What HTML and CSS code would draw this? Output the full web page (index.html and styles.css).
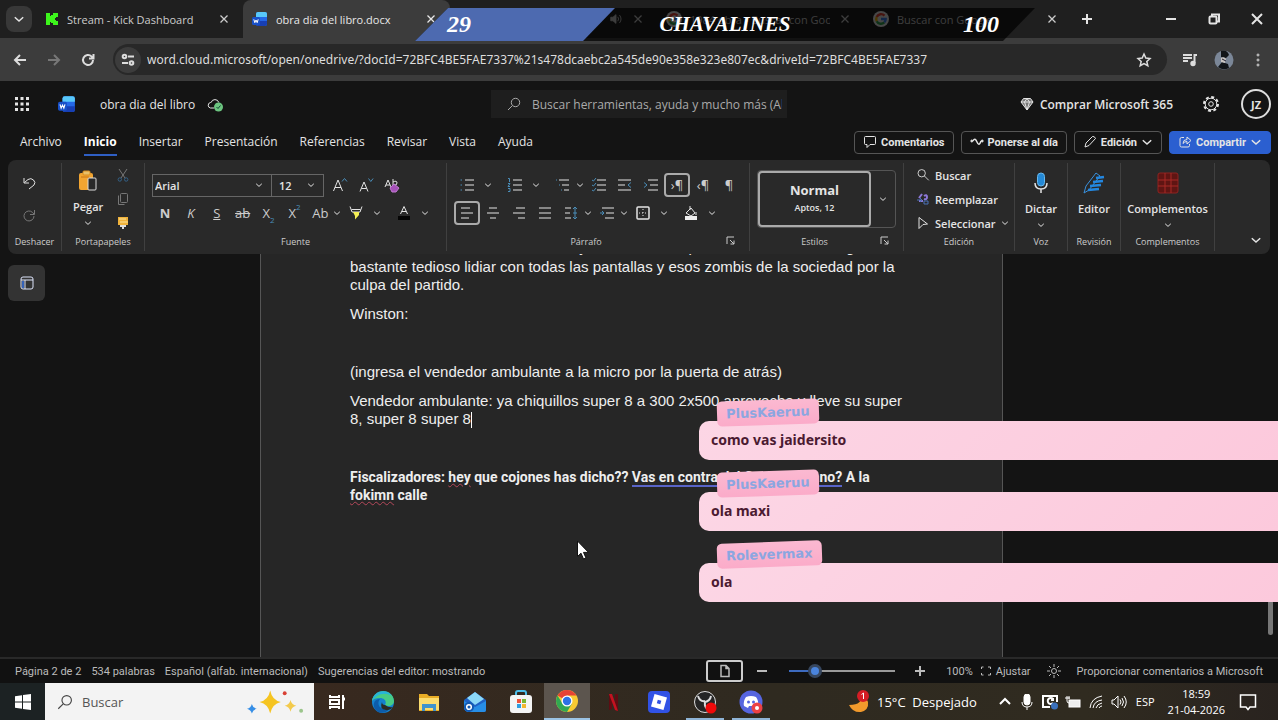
FILE: index.html
```html
<!DOCTYPE html>
<html lang="es">
  <head>
    <meta charset="UTF-8" />
    <meta name="viewport" content="width=device-width, initial-scale=1.0" />
    <title>obra dia del libro.docx</title>
    <link rel="stylesheet" href="styles.css">
  </head>
  <body>
    <!-- Iconos compartidos -->
    <svg class="sprite" aria-hidden="true">
      <symbol id="caret" viewBox="0 0 8 8"><path d="M1.2 2.8 4 5.4l2.8-2.6" /></symbol>
      <symbol id="close" viewBox="0 0 16 16"><path d="m4 4 8 8m0-8-8 8" stroke-width="1.5" /></symbol>
      <symbol id="search" viewBox="0 0 16 16"><circle cx="9.5" cy="6.5" r="4.2" /><path d="M6.4 9.6 2 14" /></symbol>
      <symbol id="google" viewBox="0 0 16 16">
        <circle cx="8" cy="8" r="8" fill="#eee" stroke="none" />
        <g fill="none" stroke-width="2.4">
          <path d="M11.5 4.6A4.8 4.8 0 0 0 3.7 6" stroke="#ea4335" />
          <path d="M3.7 6a4.8 4.8 0 0 0 0 4.2" stroke="#fbbc05" />
          <path d="M3.7 10.2a4.8 4.8 0 0 0 7.6 1.2" stroke="#34a853" />
          <path d="M11.3 11.4A4.6 4.6 0 0 0 12.7 8H8" stroke="#4285f4" />
        </g>
      </symbol>
      <symbol id="word" viewBox="0 0 16 16">
        <rect x="4" y="1" width="11" height="14" rx="2" fill="#2468e8" stroke="none" />
        <path d="M4 6V3a2 2 0 0 1 2-2h7a2 2 0 0 1 2 2v3z" fill="#58c8fa" stroke="none" />
        <path d="M4 10h11v3a2 2 0 0 1-2 2H6a2 2 0 0 1-2-2z" fill="#173fb4" stroke="none" />
        <rect x="0" y="6" width="8" height="8" rx="1.5" fill="#1850c8" stroke="none" />
        <path d="m1.8 8.3 1 3.4L4 9l1.2 2.7 1-3.4" stroke="#fff" />
      </symbol>
      <symbol id="launcher" viewBox="0 0 10 10"><path d="M1 8V1h7M4 4l4 4M8 4.5V8H4.5" /></symbol>
    </svg>

    <header class="browser">
      <div class="tab-strip">
        <button class="tab-search" aria-label="Buscar pestañas"><svg class="i12"><use href="#caret" /></svg></button>
        <div class="tab">
          <svg class="i14" viewBox="0 0 14 14"><path d="M1 1h4v3h1V3h2V1h5v4h-2v1h-1v2h1v1h2v4H8v-2H6v-1H5v3H1z" fill="#3df51c" stroke="none" /></svg>
          <span class="tab-title">Stream - Kick Dashboard</span>
          <button class="tab-close" aria-label="Cerrar"><svg class="i14"><use href="#close" /></svg></button>
        </div>
        <div class="tab active">
          <svg class="i16"><use href="#word" /></svg>
          <span class="tab-title">obra dia del libro.docx</span>
          <button class="tab-close" aria-label="Cerrar"><svg class="i14"><use href="#close" /></svg></button>
        </div>
        <div class="tab">
          <span class="tab-title"></span>
          <svg class="i14" viewBox="0 0 16 16"><path d="M2 6v4h2.5L8 13V3L4.5 6z" fill="currentColor" /><path d="M10 5.5q2 2.5 0 5M12 3.500q3.500 4.500 0 9" /></svg>
          <button class="tab-close" aria-label="Cerrar"><svg class="i14"><use href="#close" /></svg></button>
        </div>
        <div class="tab">
          <svg class="i16"><use href="#google" /></svg>
          <span class="tab-title">1984 obra - Buscar con Goo</span>
          <button class="tab-close" aria-label="Cerrar"><svg class="i14"><use href="#close" /></svg></button>
        </div>
        <div class="tab">
          <svg class="i16"><use href="#google" /></svg>
          <span class="tab-title">Buscar con Google</span>
          <button class="tab-close" aria-label="Cerrar"><svg class="i14"><use href="#close" /></svg></button>
        </div>
        <button class="new-tab" aria-label="Nueva pestaña"><svg class="i14 bold" viewBox="0 0 14 14"><path d="M7 2v10M2 7h10" /></svg></button>
        <div class="window-controls">
          <button aria-label="Minimizar"><svg class="i14 bold" viewBox="0 0 14 14"><path d="M2 7h10" /></svg></button>
          <button aria-label="Restaurar"><svg class="i14 bold" viewBox="0 0 14 14"><rect x="2.500" y="4.500" width="7" height="7" rx="1" /><path d="M5 4.500v-2h7v7h-2.500" /></svg></button>
          <button aria-label="Cerrar ventana"><svg class="i14 bold" viewBox="0 0 14 14"><path d="m2 2 10 10m0-10L2 12" /></svg></button>
        </div>
      </div>

      <div class="toolbar">
        <button aria-label="Atrás"><svg class="i16 bold" viewBox="0 0 16 16"><path d="M14 8H3m5-5L3 8l5 5" /></svg></button>
        <button class="dim" aria-label="Adelante"><svg class="i16 bold" viewBox="0 0 16 16"><path d="M2 8h11M8 3l5 5-5 5" /></svg></button>
        <button aria-label="Recargar"><svg class="i16 bold" viewBox="0 0 16 16"><path d="M13 8a5 5 0 1 1-1.500-3.600L13 6M13.500 2v4.500H9" /></svg></button>
        <div class="address">
          <span class="site-info"><svg class="i16 bold" viewBox="0 0 16 16"><circle cx="4.500" cy="4.500" r="1.800" /><path d="M8 4.500h6M2 11h6" /><circle cx="11.500" cy="11" r="1.800" /></svg></span>
          <input class="url" type="text" aria-label="Dirección" value="word.cloud.microsoft/open/onedrive/?docId=72BFC4BE5FAE7337%21s478dcaebc2a545de90e358e323e807ec&amp;driveId=72BFC4BE5FAE7337" />
          <svg class="i16" viewBox="0 0 16 16"><path d="m8 2 1.800 4 4.200.5-3.200 2.900 1 4.300L8 11.500l-3.800 2.200 1-4.300L2 6.500 6.200 6z" stroke-width="1.500" /></svg>
        </div>
        <button aria-label="Multimedia"><svg class="i16 bold" viewBox="0 0 16 16"><path d="M1 3h9M1 6h9M1 9h5M12.500 11V3H15" /><circle cx="11" cy="11.500" r="1.700" fill="currentColor" /></svg></button>
        <button aria-label="Perfil"><svg class="i20" viewBox="0 0 20 20"><circle cx="10" cy="10" r="9.500" fill="#7b8798" stroke="none" /><path d="M7 1q6-2 8 4l-3 3-5-1zM4 17l4-5 6 2 1 4q-6 3-11-1" fill="#111519" stroke="none" /><path d="M7 8q3-2 5 1l-1 4-4-1z" fill="#c9c5c2" stroke="none" /><path d="m8 9 4 2" stroke="#223" /></svg></button>
        <button aria-label="Menú"><svg class="i16" viewBox="0 0 16 16" fill="currentColor"><circle cx="8" cy="3" r="1" /><circle cx="8" cy="8" r="1" /><circle cx="8" cy="13" r="1" /></svg></button>
      </div>
    </header>

    <div class="app-header">
      <div class="app-title">
        <button aria-label="Aplicaciones"><svg class="i16" viewBox="0 0 16 16"><path class="dots" d="M2.500 2.500v0M8 2.500v0M13.500 2.500v0M2.500 8v0M8 8v0M13.500 8v0M2.500 13.500v0M8 13.500v0M13.500 13.500v0" /></svg></button>
        <svg class="i18"><use href="#word" /></svg>
        <span class="doc-name">obra dia del libro</span>
        <svg class="i16" viewBox="0 0 16 16"><path d="M7 12H3.500a2.800 2.800 0 0 1 0-5.500h.6a4 4 0 0 1 7.700 0" /><circle cx="11.500" cy="11" r="4.500" fill="#6cc580" stroke="none" /><path d="m9.500 11 1.500 1.500 2.500-3" stroke="#143" /></svg>
      </div>
      <label class="app-search">
        <svg class="i16"><use href="#search" /></svg>
        <input type="text" aria-label="Buscar" placeholder="Buscar herramientas, ayuda y mucho más (Alt + Q)" />
      </label>
      <div class="account">
        <a class="buy" href="#comprar"><svg class="i14" viewBox="0 0 14 14"><path d="M3.500 1.500h7L13 5l-6 8L1 5z" fill="#777" /><path d="M1 5h12M4.500 5 7 13l2.500-8L7 1.500z" /></svg>Comprar Microsoft 365</a>
        <button aria-label="Configuración"><svg class="i18" viewBox="0 0 18 18"><circle cx="9" cy="9" r="5.800" /><circle cx="9" cy="9" r="2.300" /><circle cx="9" cy="9" r="7" stroke-width="2" stroke-dasharray="3 2.500" /></svg></button>
        <button class="avatar">JZ</button>
      </div>
    </div>

    <div class="menu-row">
      <nav class="menu">
        <a href="#archivo">Archivo</a>
        <a class="selected" href="#inicio">Inicio</a>
        <a href="#insertar">Insertar</a>
        <a href="#presentacion">Presentación</a>
        <a href="#referencias">Referencias</a>
        <a href="#revisar">Revisar</a>
        <a href="#vista">Vista</a>
        <a href="#ayuda">Ayuda</a>
      </nav>
      <div class="actions">
        <button><svg class="i14" viewBox="0 0 14 14"><path d="M2.500 1.500h9a1 1 0 0 1 1 1v6a1 1 0 0 1-1 1H7l-3 3v-3H2.500a1 1 0 0 1-1-1v-6a1 1 0 0 1 1-1z" /></svg>Comentarios</button>
        <button><svg class="i14" viewBox="0 0 14 14"><path d="M3 6q2-4 4 1t4-1" stroke-width="1.500" /><circle cx="1.800" cy="6" r="1" fill="currentColor" /><circle cx="12.200" cy="6" r="1" fill="currentColor" /></svg>Ponerse al día</button>
        <button><svg class="i14" viewBox="0 0 14 14"><path d="m2 12 1-4 6.500-6.500q2-.5 3 2L6 10.500z" /></svg>Edición<svg class="i12"><use href="#caret" /></svg></button>
        <button class="share"><svg class="i14" viewBox="0 0 14 14"><path d="M6 2.500H3.500a1.500 1.500 0 0 0-1.500 1.500v6.500A1.500 1.500 0 0 0 3.500 12H10a1.500 1.500 0 0 0 1.500-1.500V9M5 8.500q0-4 4-4V2l4 3.500L9 9V6.500q-2.500 0-4 2z" /></svg>Compartir<svg class="i12"><use href="#caret" /></svg></button>
      </div>
    </div>

    <div class="ribbon">
      <section class="group undo">
        <div class="group-body center spread">
          <button aria-label="Deshacer"><svg class="i16" viewBox="0 0 16 16"><path d="M3 3v5h5M3.500 7.500 7 4.500q3-2 5.500.5t.5 5L8 14" /></svg></button>
          <button class="dim" aria-label="Rehacer"><svg class="i16" viewBox="0 0 16 16"><path d="M13 8a5 5 0 1 1-1.500-3.600L13 6M13.500 2v4.500H9" /></svg></button>
        </div>
        <footer>Deshacer</footer>
      </section>

      <section class="group clipboard">
        <div class="group-body row">
          <button class="big paste">
            <svg class="i24" viewBox="0 0 24 24"><rect x="3" y="4" width="14" height="17" rx="2" fill="#f2a531" stroke="none" /><rect x="7" y="2" width="7" height="4" rx="1" fill="#e8c06a" stroke="#d88c1c" /><path d="M5 8h8v10" stroke="#c87617" /><rect x="12" y="9" width="8" height="12" rx="1" fill="#292929" stroke="#ddd" /></svg>
            Pegar
            <svg class="i8"><use href="#caret" /></svg>
          </button>
          <div class="stack">
            <button class="dim" aria-label="Cortar"><svg class="i14" viewBox="0 0 14 14"><path d="m3 1 6 9m2-9-6 9" /><circle cx="3.800" cy="11.500" r="1.700" stroke="#346187" /><circle cx="10.200" cy="11.500" r="1.700" stroke="#346187" /></svg></button>
            <button class="dim" aria-label="Copiar"><svg class="i14" viewBox="0 0 14 14"><rect x="4.500" y="1.500" width="7" height="9" rx="1" /><path d="M2.500 3.500v9h6" /></svg></button>
            <button aria-label="Copiar formato"><svg class="i14" viewBox="0 0 14 14"><path d="M2 1h10v8H2z" fill="#f0b23a" stroke="none" /><path d="M3 3h7M4 6h8" stroke="#fbe29a" /><path d="M4 9h6v2H8v2H6v-2H4z" fill="#ddd" stroke="none" /></svg></button>
          </div>
        </div>
        <footer>Portapapeles</footer>
      </section>

      <section class="group font">
        <div class="group-body">
          <div class="tools">
            <label class="combo family">
              <select aria-label="Fuente"><option>Arial</option></select>
              <svg class="i8"><use href="#caret" /></svg>
            </label>
            <label class="combo size">
              <select aria-label="Tamaño"><option>12</option></select>
              <svg class="i8"><use href="#caret" /></svg>
            </label>
            <button aria-label="Aumentar tamaño"><svg class="i16" viewBox="0 0 16 16"><path d="M1.500 14 6 3l4.500 11M3 10.500h6" /><path d="m10 4.500 2.500-3 2.500 3" class="blue" /></svg></button>
            <button aria-label="Reducir tamaño"><svg class="i16" viewBox="0 0 16 16"><path d="M2 14.500 6 5l4 9.500M3.500 11.500h5" /><path d="m10.500 1.500 2.300 3 2.300-3" class="blue" /></svg></button>
            <button aria-label="Borrar formato"><svg class="i16" viewBox="0 0 16 16"><path d="M1 10 4 3l3 7M2 8h4M9 2v6M9 5q4-2 4 1t-4 2" /><path d="m6 11 4-4 5 4-3 4H8z" fill="#a552b8" stroke="#c27bd2" /></svg></button>
          </div>
          <div class="tools">
            <button class="letter bold-letter">N</button>
            <button class="letter italic">K</button>
            <button class="letter underline">S</button>
            <button class="letter strike">ab</button>
            <button class="letter">X<sub>2</sub></button>
            <button class="letter">X<sup>2</sup></button>
            <span class="split narrow"><button class="letter">Ab</button><svg class="i8"><use href="#caret" /></svg></span>
            <span class="split"><button aria-label="Resaltado"><svg class="i16" viewBox="0 0 16 16"><path d="M2 1.500 4 7h8l2-5.500M3.500 4.500h9" /><path d="M5 7h6v3l-4 4.500V11z" fill="#f4ef55" stroke="none" /></svg></button><svg class="i8"><use href="#caret" /></svg></span>
            <span class="split"><button aria-label="Color de fuente"><svg class="i16" viewBox="0 0 16 16"><path d="M4.500 9 8 1.500 11.500 9M6 6.500h4" /><path d="M2 11h12v4H2z" fill="#050505" stroke="none" /></svg></button><svg class="i8"><use href="#caret" /></svg></span>
          </div>
        </div>
        <footer>Fuente</footer>
      </section>

      <section class="group paragraph">
        <div class="group-body">
          <div class="tools">
            <span class="split"><button aria-label="Viñetas"><svg class="i16" viewBox="0 0 16 16"><path d="M6 3h9M6 8h9M6 13h9" /><path class="blue" d="M1.500 3H3M1.500 8H3M1.500 13H3" /></svg></button><svg class="i8"><use href="#caret" /></svg></span>
            <span class="split"><button aria-label="Numeración"><svg class="i16" viewBox="0 0 16 16"><path d="M6 3h9M6 8h9M6 13h9" /><path class="blue" d="M1 1.500h1.500V5M1 6.500h2L1 9.500h2M1 11.500h2v3H1" /></svg></button><svg class="i8"><use href="#caret" /></svg></span>
            <span class="split narrow"><button aria-label="Lista multinivel"><svg class="i16" viewBox="0 0 16 16"><path d="M4 3h10M7 8h7M9 13h5" /><path class="blue" d="M1 3h1M4 8h1M6 13h1" /></svg></button><svg class="i8"><use href="#caret" /></svg></span>
            <button aria-label="Estilo de lista"><svg class="i16" viewBox="0 0 16 16"><path d="M6 3h9M6 8h9M6 13h9" /><path class="blue" d="m1 3 1.500 1L5 1M1 8l1.500 1L5 6M1 13l1.500 1L5 11" /></svg></button>
            <button aria-label="Disminuir sangría"><svg class="i16" viewBox="0 0 16 16"><path d="M1 3h13M1 8h7M1 13h13" /><path class="blue" d="m14 5.500-3 2.500 3 2.500" /></svg></button>
            <button aria-label="Aumentar sangría"><svg class="i16" viewBox="0 0 16 16"><path d="M5 3h10M7 8h8M5 13h10" /><path class="blue" d="m1 5.500 3 2.500-3 2.500" /></svg></button>
            <button class="letter pressed">›¶</button>
            <button class="letter">‹¶</button>
            <button class="letter">¶</button>
          </div>
          <div class="tools">
            <button class="pressed" aria-label="Alinear a la izquierda"><svg class="i16" viewBox="0 0 16 16"><path d="M2 3h9M2 8h12M2 13h8" /></svg></button>
            <button aria-label="Centrar"><svg class="i16" viewBox="0 0 16 16"><path d="M4 3h8M2 8h12M5 13h6" /></svg></button>
            <button aria-label="Alinear a la derecha"><svg class="i16" viewBox="0 0 16 16"><path d="M5 3h9M2 8h12M7 13h7" /></svg></button>
            <button aria-label="Justificar"><svg class="i16" viewBox="0 0 16 16"><path d="M2 3h12M2 8h12M2 13h12" /></svg></button>
            <span class="split narrow"><button aria-label="Interlineado"><svg class="i16" viewBox="0 0 16 16"><path d="M2 3h6M2 8h5M2 13h6" /><path class="blue" d="M12 2v12M10 4l2-2 2 2M10 12l2 2 2-2M10 8h4" /></svg></button><svg class="i8"><use href="#caret" /></svg></span>
            <span class="split narrow"><button aria-label="Espaciado"><svg class="i16" viewBox="0 0 16 16"><path d="M3 3h12M7 8h8M6 13h9" /><path class="blue" d="M1 8h4M3 6l2 2-2 2" /></svg></button><svg class="i8"><use href="#caret" /></svg></span>
            <span class="split"><button aria-label="Bordes"><svg class="i16" viewBox="0 0 16 16"><rect x="2" y="2" width="12" height="12" rx="1" stroke-width="1.500" /><path d="M8 4v8M4 8h8" stroke-dasharray="1 2" /></svg></button><svg class="i8"><use href="#caret" /></svg></span>
            <span class="split"><button aria-label="Sombreado"><svg class="i16" viewBox="0 0 16 16"><path d="m3 8 5-5 4 5-4 3zM7 1v4M13 7v3" /><path d="M2 11h12v4H2z" fill="#eee" stroke="none" /></svg></button><svg class="i8"><use href="#caret" /></svg></span>
          </div>
        </div>
        <footer class="with-launcher">Párrafo<svg class="i10 launch"><use href="#launcher" /></svg></footer>
      </section>

      <section class="group styles">
        <div class="group-body">
          <div class="gallery">
            <button class="style-card"><strong>Normal</strong><small>Aptos, 12</small></button>
            <button class="gallery-more" aria-label="Más estilos"><svg class="i8"><use href="#caret" /></svg></button>
          </div>
        </div>
        <footer class="with-launcher">Estilos<svg class="i10 launch"><use href="#launcher" /></svg></footer>
      </section>

      <section class="group editing">
        <div class="group-body stack">
          <button><svg class="i14" viewBox="0 0 16 16"><circle cx="6.500" cy="6" r="4.200" /><path d="m9.600 9.100 5 5" /></svg>Buscar</button>
          <button><svg class="i14" viewBox="0 0 14 14"><path d="M6 2 3 6M3 9h4M8 4q3-2 3 1T8 7" stroke="#8d78d8" stroke-width="2" /><path d="M1 8h5M4 6l2 2-2 2M8 9h4v3H8z" stroke="#4a72b8" /></svg>Reemplazar</button>
          <button><svg class="i14" viewBox="0 0 14 14"><path d="m3 1.500 8.500 6.500-4.500.5L3 12.500z" /></svg>Seleccionar<svg class="i8"><use href="#caret" /></svg></button>
        </div>
        <footer>Edición</footer>
      </section>

      <section class="group voice">
        <div class="group-body center">
          <button class="big">
            <svg class="i24" viewBox="0 0 24 24"><rect x="8.500" y="2" width="7" height="13" rx="3.500" fill="#2489d6" stroke="#66b8ef" /><path d="M6 12q0 6 6 6t6-6M12 18v4" stroke-width="1.500" /></svg>
            Dictar
            <svg class="i8"><use href="#caret" /></svg>
          </button>
        </div>
        <footer>Voz</footer>
      </section>

      <section class="group review">
        <div class="group-body center">
          <button class="big">
            <svg class="i24" viewBox="0 0 24 24"><path d="m2 22 2-7L14 2l4 3L7 19z" fill="#292929" stroke="#3b91dc" /><path d="m14 7 8-1M11 11l10-1M8 15l11-1M6 19l11-1" stroke="#2387e0" stroke-width="2.500" /></svg>
            Editor
          </button>
        </div>
        <footer>Revisión</footer>
      </section>

      <section class="group addins">
        <div class="group-body center">
          <button class="big">
            <svg class="i24" viewBox="0 0 24 24"><rect x="2" y="2" width="20" height="20" rx="2" fill="#5f1513" stroke="#8e2320" /><path d="M2 9h20M2 15h20M9 2v20M15 2v20" stroke="#a82a26" /></svg>
            Complementos
            <svg class="i8"><use href="#caret" /></svg>
          </button>
        </div>
        <footer>Complementos</footer>
      </section>

      <button class="collapse" aria-label="Contraer cinta"><svg class="i12"><use href="#caret" /></svg></button>
    </div>

    <main class="canvas">
      <div class="side">
        <button class="nav-pane" aria-label="Panel de navegación"><svg class="i16" viewBox="0 0 16 16"><rect x="2" y="2" width="12" height="12" rx="2" stroke="#dde4fa" /><path d="M2 5h12M6 5v9" stroke="#dde4fa" /><path d="M3 6h2v7H3z" fill="#3562b8" stroke="none" /></svg></button>
      </div>
      <article class="page">
        <p class="scrolled">Esto es real, todos los días miedo y cansado de la policía en el control, luego es</p>
        <p>bastante tedioso lidiar con todas las pantallas y esos zombis de la sociedad por la<br />
          culpa del partido.</p>
        <p>Winston:</p>
        <p>&nbsp;</p>
        <p>(ingresa el vendedor ambulante a la micro por la puerta de atrás)</p>
        <p>Vendedor ambulante: ya chiquillos super 8 a 300 2x500 aproveche y lleve su super<br />
          8, super 8 super 8<span class="text-cursor"></span></p>
        <p>&nbsp;</p>
        <p class="strong">Fiscalizadores: <span class="spelling">hey</span> que cojones has dicho?? <span class="grammar">Vas en contra del Gran Hermano?</span> A la<br />
          <span class="spelling">fokimn</span> calle</p>
      </article>
      <div class="side"></div>
      <div class="scrollbar"><span class="thumb"></span></div>
    </main>

    <div class="status-bar">
      <span>Página 2 de 2</span>
      <span>534 palabras</span>
      <span>Español (alfab. internacional)</span>
      <span>Sugerencias del editor: mostrando</span>
      <div class="view-tools">
        <button class="view-mode" aria-label="Vista de impresión"><svg class="i14" viewBox="0 0 14 14"><path d="M3 1.500h5l3 3v8H3zM8 1.500v3h3" stroke-width="1.500" /></svg></button>
        <button aria-label="Alejar"><svg class="i14 bold" viewBox="0 0 14 14"><path d="M2 7h10" /></svg></button>
        <input class="zoom" type="range" min="0" max="100" value="20" aria-label="Zoom" />
        <button aria-label="Acercar"><svg class="i14 bold" viewBox="0 0 14 14"><path d="M2 7h10M7 2v10" /></svg></button>
        <span class="zoom-value">100%</span>
        <button class="fit"><svg class="i12" viewBox="0 0 12 12"><path d="M1.500 4V2h2M8 2h2.500v2M10.500 8v2H8M3.500 10h-2V8" /></svg>Ajustar</button>
        <svg class="i14" viewBox="0 0 14 14"><circle cx="7" cy="7" r="2.500" /><path d="M7 0v3M7 11v3M0 7h3M11 7h3M2 2l2 2M10 10l2 2M12 2l-2 2M4 10l-2 2" /></svg>
        <a href="#comentarios">Proporcionar comentarios a Microsoft</a>
      </div>
    </div>

    <div class="taskbar">
      <button class="start" aria-label="Inicio"><svg class="i16" viewBox="0 0 16 16"><path d="m0 2.200 7-1v6.300H0zM8 1l8-1v7.500H8zM0 8.500h7v6.300l-7-1zM8 8.500h8V16l-8-1z" fill="#fff" stroke="none" /></svg></button>
      <label class="task-search">
        <svg class="i18"><use href="#search" /></svg>
        <input type="text" aria-label="Buscar en Windows" placeholder="Buscar" />
        <svg class="sparkles" viewBox="0 0 60 26"><g stroke="none"><path d="M24 1q2 10 11 12-9 2-11 12-2-10-11-12 9-2 11-12z" fill="#f5c421" /><path d="M45 11q1 5 6 6-5 1-6 6-1-5-6-6 5-1 6-6z" fill="#f3ca4c" /><path d="M5 15q1 4 5 5-4 1-5 5-1-4-5-5 4-1 5-5z" fill="#358ee6" /><circle cx="39" cy="4" r="2" fill="#d84034" /><circle cx="56" cy="22" r="2" fill="#9bc58b" /></g></svg>
      </label>
      <button class="task" aria-label="Vista de tareas"><svg class="i18 bold" viewBox="0 0 18 18"><path d="M2 2v2h9V2M2 16v-2h9v2M2 7h9v4H2zM15 2v14" /><path d="M14 6h3" stroke-width="3" /></svg></button>
      <button class="task" aria-label="Edge"><svg class="i24" viewBox="0 0 24 24"><g stroke="none"><circle cx="12" cy="12" r="11" fill="#1482cf" /><path d="M1 11C3-2 22-2 23 11c0 5-6 6-9 4 2-3 0-7-5-7-4 0-7 1-8 3z" fill="#47cc86" /><path d="M1 11C3 0 16-2 21 6 13 1 5 5 1 11z" fill="#27b4db" /><path d="M9 9c-4 5 0 12 9 10-6 8-17 2-15-6 1-3 3-4 6-4z" fill="#0d5ca9" /><path d="M14 15q-3 0-3-3-3 7 4 8 4 1 7-3-4 1-8-2" fill="#2b2b25" /></g></svg></button>
      <button class="task" aria-label="Explorador"><svg class="i24" viewBox="0 0 24 24"><g stroke="none"><path d="M2 4h8l2 2h10v15H2z" fill="#e9ad26" /><path d="M2 8h20v12H2z" fill="#fbdc6e" /><path d="M5 14h14v7h-3v-3H8v3H5z" fill="#3f93ce" /></g></svg></button>
      <button class="task" aria-label="Correo"><svg class="i24" viewBox="0 0 24 24"><g stroke="none"><path d="m1 10 11-8 11 8v10q0 2-2 2H5q-4-1-4-5z" fill="#1f62c5" /><path d="m4 8 8-6 9 7-9 6z" fill="#8bd8f8" /><path d="m1 11 11 6 11-6v9q0 2-2 2H5q-4-1-4-5z" fill="#278ee6" /><circle cx="6" cy="17" r="5" fill="#1259b2" /></g><circle cx="6" cy="17" r="2.300" stroke="#fff" stroke-width="1.500" /></svg></button>
      <button class="task" aria-label="Store"><svg class="i24" viewBox="0 0 24 24"><path d="M7 6V3q0-2 2-2h6q2 0 2 2v3" stroke="#4cbde9" stroke-width="2" /><g stroke="none"><rect x="1" y="5" width="22" height="18" rx="3" fill="#f4f4f4" /><path d="M8 9h4v4H8z" fill="#ef5238" /><path d="M13 9h4v4h-4z" fill="#78b733" /><path d="M8 14h4v4H8z" fill="#2e9ee1" /><path d="M13 14h4v4h-4z" fill="#f3b62e" /></g></svg></button>
      <button class="task current" aria-label="Chrome"><svg class="i24" viewBox="0 0 24 24"><g stroke="none"><circle cx="12" cy="12" r="11" fill="#f7ca32" /><path d="M12 12 2.500 6.500A11 11 0 0 1 21.500 6.500H12z" fill="#e54335" /><path d="M2.500 6.500a11 11 0 0 0 9.500 16.500l5-8.500-9.500 0z" fill="#31a852" /><circle cx="12" cy="12" r="5.500" fill="#fff" /><circle cx="12" cy="12" r="4.200" fill="#2c72e4" /></g></svg></button>
      <button class="task" aria-label="Netflix"><svg class="i20" viewBox="0 0 20 20"><g stroke="none"><path d="M6 2h3v15l-3 1zM12 2h3v17l-3-1z" fill="#5e0d13" /><path d="M6 2h3l6 17-3-1z" fill="#c41220" /></g></svg></button>
      <button class="task" aria-label="Roblox"><svg class="i24" viewBox="0 0 24 24"><g stroke="none"><rect x="1" y="1" width="22" height="22" rx="4" fill="#3152e5" /><path d="m7.500 4 12.500 3.500L16.500 20 4 16.500z" fill="#fff" /><path d="m10.800 9.800 3.500 1-1 3.500-3.500-1z" fill="#3152e5" /></g></svg></button>
      <button class="task open" aria-label="OBS"><svg class="i24" viewBox="0 0 24 24"><circle cx="12" cy="12" r="10.500" fill="#252525" stroke="#ddd" /><path d="M12 11q-5 1-7-5M12 12q5-1 6-6M12 12q-1 6 4 8" stroke="#ddd" stroke-width="2" /><circle cx="18" cy="18" r="5.500" fill="#f00a0a" stroke="none" /></svg></button>
      <button class="task open" aria-label="Discord"><svg class="i24" viewBox="0 0 24 24"><g stroke="none"><circle cx="12" cy="12" r="11.500" fill="#5665df" /><path d="M7 7q5-2 10 0 3 4 2 9l-4 2-1-2h-4l-1 2-4-2q-1-5 2-9z" fill="#fff" /><circle cx="9.500" cy="12" r="1.500" fill="#5665df" /><circle cx="14.500" cy="12" r="1.500" fill="#5665df" /><circle cx="18" cy="18" r="5.500" fill="#ec4145" /><circle cx="18" cy="18" r="2" fill="#fff" /></g></svg></button>
      <div class="tray">
        <button class="weather"><svg class="i24" viewBox="0 0 24 24"><path d="M13 4q4 11-11 11 4 8 12 7 8-2 7-10-2-6-8-8z" fill="#f29a2c" stroke="none" /><circle cx="16" cy="6" r="6" fill="#d51d25" stroke="none" /><path d="m14.500 4.500 2-1.500v6" stroke="#fff" /></svg>15°C&nbsp; Despejado</button>
        <svg class="i14 bold" viewBox="0 0 14 14"><path d="m2 9 5-5 5 5" /></svg>
        <svg class="i16" viewBox="0 0 16 16"><rect x="5" y="0" width="6" height="11" rx="3" fill="#fff" /><path d="M3 8q0 5 5 5t5-5M8 13v3" /></svg>
        <svg class="i16 bold" viewBox="0 0 16 16"><path d="M8 13H1V2h14v6M11 5a3 3 0 1 0 0 4M11 4v2H9" /><circle cx="12.500" cy="12" r="3.500" fill="#3b71bc" stroke="none" /></svg>
        <svg class="i16" viewBox="0 0 16 16"><rect x="4" y="6" width="11" height="7" fill="#eee" /><path d="M0 4h5M2 2v5q0 2 2 2M4 2v3" /></svg>
        <svg class="i16" viewBox="0 0 16 16"><path d="M2 14Q3 4 14 2M5 14q1-7 9-8M8 14q1-4 6-5M11 14q1-2 3-2" /></svg>
        <svg class="i16" viewBox="0 0 16 16"><path d="M1 6v4h2l4 4V2L3 6zM9 5.500q2 2.500 0 5M11 4q3 4 0 8M13 2q4.500 6 0 12" /></svg>
        <span class="lang">ESP</span>
        <time class="clock">18:59<br />21-04-2026</time>
        <svg class="i18" viewBox="0 0 18 18"><path d="M1.500 2h15v12H11l-2 2.500L7 14H1.500z" stroke-width="1.500" /></svg>
      </div>
    </div>

    <!-- Superposiciones del directo -->
    <div class="scoreboard">
      <span class="score">29</span>
      <span class="team">CHAVALINES</span>
      <span class="total">100</span>
    </div>

    <ul class="chat">
      <li><span class="user">PlusKaeruu</span>como vas jaidersito</li>
      <li><span class="user">PlusKaeruu</span>ola maxi</li>
      <li><span class="user">Rolevermax</span>ola</li>
    </ul>

    <svg class="pointer" viewBox="0 0 14 20"><path d="M1.500 1v15.500l3.500-3.300 2.500 5.800 2.500-1-2.500-5.600h5z" fill="#fff" stroke="#111" /></svg>
  </body>
</html>
```

FILE: styles.css
```css
* {
  box-sizing: border-box;
}
body {
  margin: 0;
  position: relative;
  height: 100vh;
  display: flex;
  flex-direction: column;
  overflow: hidden;
  background: #141414;
  color: #e4e4e4;
  font-family: "Open Sans", "Noto Sans", sans-serif;
  font-size: 12px;
}
button,
input,
select {
  margin: 0;
  padding: 0;
  border: 0;
  background: none;
  color: inherit;
  font: inherit;
}
button {
  display: flex;
  align-items: center;
  justify-content: center;
}
a {
  color: inherit;
  text-decoration: none;
}
svg {
  flex: none;
  fill: none;
  stroke: currentColor;
}
.sprite {
  position: absolute;
  width: 0;
  height: 0;
}
.i8 { width: 8px; height: 8px; }
.i10 { width: 10px; height: 10px; }
.i12 { width: 12px; height: 12px; }
.i14 { width: 14px; height: 14px; }
.i16 { width: 16px; height: 16px; }
.i18 { width: 18px; height: 18px; }
.i20 { width: 20px; height: 20px; }
.i24 { width: 24px; height: 24px; }
.bold {
  stroke-width: 2;
}
.blue {
  stroke: #4a8db8;
}
.dots {
  stroke-width: 3;
  stroke-linecap: square;
}
.dim {
  color: #777;
}

/* Navegador */
.tab-strip {
  display: flex;
  height: 38px;
  padding-left: 6px;
  background: #1f1f1f;
}
.tab-search {
  width: 26px;
  height: 26px;
  margin: 6px 4px 0 0;
  border-radius: 8px;
  background: #383838;
}
.tab {
  flex: 0 1 207px;
  min-width: 0;
  display: flex;
  align-items: center;
  gap: 8px;
  padding: 0 12px 0 9px;
  color: #ccc;
  font-size: 11px;
}
.tab.active {
  background: #3c3c3c;
  border-radius: 8px 8px 0 0;
  color: #e8e8e8;
}
.tab-title {
  flex: 1;
  overflow: hidden;
  white-space: nowrap;
}
.new-tab {
  width: 32px;
}
.window-controls {
  flex: 1;
  display: flex;
  justify-content: flex-end;
}
.window-controls button {
  width: 43px;
}
.toolbar {
  display: flex;
  align-items: center;
  height: 43px;
  padding: 0 3px;
  background: #3c3c3c;
  color: #ddd;
}
.toolbar button {
  width: 34px;
}
.toolbar .dim {
  color: #777;
}
.address {
  flex: 1;
  display: flex;
  align-items: center;
  height: 31px;
  margin: 0 6px 0 8px;
  padding: 0 15px 0 2px;
  border-radius: 16px;
  background: #282828;
}
.site-info {
  display: grid;
  place-items: center;
  width: 26px;
  height: 26px;
  margin-right: 6px;
  border-radius: 50%;
  background: #3c3c3c;
}
.url {
  flex: 1;
  min-width: 0;
  font-family: "Noto Sans", sans-serif;
  font-size: 12px;
}

/* Cabecera de Word */
.app-header {
  display: grid;
  grid-template-columns: 1fr 296px 1fr;
  align-items: center;
  height: 46px;
  padding: 0 7px;
}
.app-title,
.account {
  display: flex;
  align-items: center;
}
.app-title {
  padding-left: 7px;
}
.app-title .i18 {
  margin: 0 24px 0 28px;
}
.doc-name {
  margin-right: 12px;
}
.app-search {
  display: flex;
  align-items: center;
  gap: 10px;
  height: 28px;
  padding: 0 5px 0 15px;
  background: #1e1e1e;
  color: #aaa;
}
.app-search input {
  flex: 1;
  min-width: 0;
}
.app-search input::placeholder {
  color: #aaa;
}
.account {
  justify-content: flex-end;
}
.buy {
  display: flex;
  align-items: center;
  gap: 6px;
  margin-right: 29px;
  font-weight: 600;
}
.avatar {
  width: 30px;
  height: 30px;
  margin-left: 21px;
  border: 2px solid #ddd;
  border-radius: 50%;
  font-size: 11px;
  font-weight: 700;
}
.menu-row {
  display: flex;
  justify-content: space-between;
  align-items: center;
  height: 33px;
  padding: 0 7px 3px 20px;
}
.menu {
  display: flex;
  gap: 22px;
}
.menu a {
  padding: 4px 0 3px;
  border-bottom: 2px solid transparent;
  line-height: 18px;
}
.menu .selected {
  border-color: #2f5fc4;
  color: #fff;
  font-weight: 700;
}
.actions {
  display: flex;
  gap: 7px;
}
.actions button {
  gap: 4px;
  height: 23px;
  padding: 0 8px;
  border: 1px solid #555;
  border-radius: 4px;
  font-family: Roboto, sans-serif;
  font-size: 11px;
  font-weight: 700;
}
.actions .share {
  border-color: #2b5fd0;
  background: #2b5fd0;
}

/* Cinta */
.ribbon {
  display: flex;
  height: 94px;
  margin: 0 8px;
  border-radius: 8px;
  background: #292929;
}
.group {
  flex: none;
  display: flex;
  flex-direction: column;
  margin: 3px 0;
  padding: 0 7px;
  border-right: 1px solid #404040;
}
.group-body {
  display: flex;
  flex-direction: column;
  justify-content: center;
  gap: 4px;
  height: 72px;
}
.group-body.center {
  align-items: center;
}
.group-body.spread {
  gap: 17px;
  padding-right: 12px;
}
.group-body.row {
  flex-direction: row;
  justify-content: space-between;
}
.group footer {
  position: relative;
  color: #ccc;
  font-size: 9px;
  line-height: 14px;
  text-align: center;
  white-space: nowrap;
}
.group .with-launcher {
  padding-right: 24px;
}
.launch {
  position: absolute;
  right: 6px;
  top: 1px;
}
.undo { width: 54px; padding: 0; }
.clipboard { width: 83px; }
.font { width: 302px; }
.paragraph { width: 303px; }
.styles { width: 154px; }
.editing { width: 111px; }
.voice { width: 53px; padding: 0; }
.review { width: 53px; padding: 0; }
.addins { width: 94px; padding: 0; }
.tools {
  display: flex;
  align-items: center;
  height: 24px;
}
.tools button {
  width: 26px;
  height: 24px;
}
.tools .pressed {
  border: 2px solid #aaa;
  border-radius: 4px;
}
.split {
  display: flex;
  align-items: center;
  gap: 4px;
  width: 48px;
}
.split.narrow {
  gap: 0;
  width: 36px;
}
.letter {
  color: #ccc;
  font-size: 13px;
}
.letter sub,
.letter sup {
  color: #4a8db8;
  font-size: 8px;
}
.letter sub {
  align-self: flex-end;
}
.letter sup {
  align-self: flex-start;
}
.bold-letter { font-weight: 700; }
.italic { font-style: italic; }
.underline { text-decoration: underline; }
.strike { text-decoration: line-through; }
.combo {
  display: grid;
  grid-template-columns: 1fr 16px;
  align-items: center;
  height: 23px;
  border: 1px solid #666;
  font-weight: 600;
}
.combo select {
  grid-area: 1 / 1 / 2 / 3;
  appearance: none;
  padding-left: 2px;
  font-size: 11px;
}
.combo svg {
  grid-area: 1 / 2;
}
.family {
  width: 120px;
}
.size {
  width: 52px;
  margin-right: 3px;
  border-left: 0;
}
.size select {
  padding-left: 7px;
}
.big {
  flex-direction: column;
  justify-content: flex-start;
  gap: 4px;
  height: 68px;
  padding-top: 6px;
  font-size: 11px;
  font-weight: 600;
  line-height: 20px;
}
.big .i8 {
  margin-top: -2px;
}
.paste {
  margin-left: 4px;
}
.stack {
  display: flex;
  flex-direction: column;
}
.stack button {
  height: 24px;
}
.clipboard .stack {
  justify-content: center;
  margin-right: 7px;
}
.editing .group-body {
  align-items: flex-start;
  gap: 0;
  padding-left: 5px;
}
.editing button {
  gap: 5px;
  font-size: 11px;
  font-weight: 600;
}
.gallery {
  display: flex;
  height: 58px;
  border: 1px solid #555;
  border-radius: 4px;
}
.style-card {
  flex-direction: column;
  flex: 1;
  border: 2px solid #aaa;
  border-radius: 4px;
  line-height: 18px;
}
.style-card strong {
  font-size: 13px;
}
.style-card small {
  font-size: 9px;
  font-weight: 600;
}
.gallery-more {
  width: 24px;
}
.collapse {
  flex: 1;
  align-items: flex-end;
  justify-content: flex-end;
  padding: 0 8px 8px 0;
}

/* Documento */
.canvas {
  flex: 1;
  min-height: 0;
  display: flex;
}
.side {
  flex: 1;
}
.nav-pane {
  width: 37px;
  height: 36px;
  margin: 11px 8px;
  border-radius: 6px;
  background: #333;
}
.page {
  flex: 0 1 743px;
  overflow: hidden;
  padding: 0 89px;
  border: solid #555;
  border-width: 0 1px;
  background: #262626;
  color: #eee;
  font-family: "Liberation Sans", Arial, sans-serif;
  font-size: 15px;
  line-height: 18px;
  white-space: nowrap;
}
.page p {
  margin: 0 0 11px;
}
.page .scrolled {
  margin: -16px 0 2px;
}
.text-cursor {
  display: inline-block;
  height: 16px;
  border-left: 1px solid #fff;
  vertical-align: middle;
}
.page .strong {
  font-family: Roboto, sans-serif;
  font-size: 14px;
  font-weight: 700;
}
.spelling {
  text-decoration: underline wavy #b5485a 1px;
}
.grammar {
  border-bottom: 2px solid #5964c8;
}
.scrollbar {
  display: flex;
  flex-direction: column;
  justify-content: flex-end;
  align-items: center;
  width: 15px;
  padding-bottom: 22px;
}
.thumb {
  width: 5px;
  height: 35px;
  border-radius: 3px;
  background: #777;
}

/* Barra de estado */
.status-bar {
  display: flex;
  align-items: center;
  gap: 10px;
  height: 26px;
  padding: 0 15px;
  border-top: 2px solid #292929;
  background: #111;
  color: #bbb;
  font-family: Roboto, sans-serif;
  font-size: 11px;
  white-space: nowrap;
}
.view-tools {
  display: flex;
  align-items: center;
  margin-left: auto;
}
.view-mode {
  width: 37px;
  height: 22px;
  margin-right: 12px;
  border: 2px solid #ccc;
  border-radius: 3px;
}
.zoom {
  appearance: none;
  width: 106px;
  height: 18px;
  margin: 0 18px 0 20px;
  background: linear-gradient(to right, #3d6bc0 20%, #999 20%) center / 100% 2px no-repeat;
}
.zoom::-webkit-slider-thumb {
  appearance: none;
  width: 14px;
  height: 14px;
  border: 3px solid #37475f;
  border-radius: 50%;
  background: #4a84dd;
}
.zoom-value {
  margin: 0 7px 0 19px;
}
.fit {
  gap: 4px;
  margin-right: 16px;
}
.view-tools a {
  margin-left: 16px;
}

/* Barra de tareas */
.taskbar {
  display: flex;
  height: 37px;
  background: linear-gradient(to right, #1c2223 0, #1c2223 46px, #38291f 315px, #2f2a20 60%, #302b20 85%, #29231f);
  color: #fff;
}
.start {
  width: 45px;
}
.task-search {
  display: flex;
  align-items: center;
  gap: 8px;
  width: 269px;
  padding: 0 9px 0 11px;
  background: #f3f3f3;
  color: #444;
}
.task-search input {
  flex: 1;
  min-width: 0;
  font-size: 13px;
}
.task-search input::placeholder {
  color: #555;
}
.sparkles {
  width: 58px;
  height: 26px;
}
.task {
  width: 46px;
}
.task.open {
  background: linear-gradient(#8fb4d6, #8fb4d6) bottom / 38px 2px no-repeat;
}
.task.current {
  background: #5c554e;
  border-bottom: 2px solid #9cc4e6;
}
.tray {
  flex: 1;
  display: flex;
  align-items: center;
  justify-content: flex-end;
  gap: 7px;
  padding-right: 21px;
}
.weather {
  gap: 6px;
  margin-right: 14px;
  font-size: 13px;
}
.lang {
  margin: 0 6px 0 2px;
  font-size: 11px;
}
.clock {
  margin-right: 7px;
  font-size: 11px;
  line-height: 16px;
  text-align: center;
}

/* Superposiciones */
.scoreboard {
  position: absolute;
  top: 8px;
  left: 415px;
  display: grid;
  grid-template-columns: 200px 1fr 200px;
  align-items: center;
  width: 620px;
  height: 33px;
  clip-path: polygon(33px 0, 100% 0, calc(100% - 32px) 100%, 0 100%);
  background: rgba(0, 0, 0, 0.7);
  color: #fff;
  font-family: "Liberation Serif", "Times New Roman", serif;
  font-size: 24px;
  font-style: italic;
  font-weight: 700;
}
.score {
  padding-left: 32px;
  line-height: 33px;
  background: #4d6ab0;
  clip-path: polygon(0 0, 100% 0, calc(100% - 32px) 100%, 0 100%);
}
.team {
  font-size: 21px;
  text-align: center;
}
.total {
  padding-right: 36px;
  text-align: right;
}
.chat {
  position: absolute;
  top: 421px;
  left: 699px;
  right: 0;
  display: flex;
  flex-direction: column;
  gap: 32px;
  margin: 0;
  padding: 0;
  list-style: none;
}
.chat li {
  position: relative;
  padding: 0 12px 2px;
  border-radius: 10px 0 0 10px;
  background: linear-gradient(135deg, #fcd6e5, #fcc9dc);
  color: #4b1a31;
  font-family: "Noto Sans", sans-serif;
  font-size: 14px;
  font-weight: 700;
  line-height: 37px;
}
.user {
  position: absolute;
  top: -21px;
  left: 18px;
  padding: 0 9px;
  border-radius: 5px;
  background: linear-gradient(#fbb9d1, #fbabc9);
  color: #8ba6e0;
  font-family: "DejaVu Sans", sans-serif;
  font-size: 13px;
  line-height: 25px;
  transform: rotate(-2deg);
}
.pointer {
  position: absolute;
  top: 540px;
  left: 576px;
  width: 14px;
  height: 20px;
}
```
